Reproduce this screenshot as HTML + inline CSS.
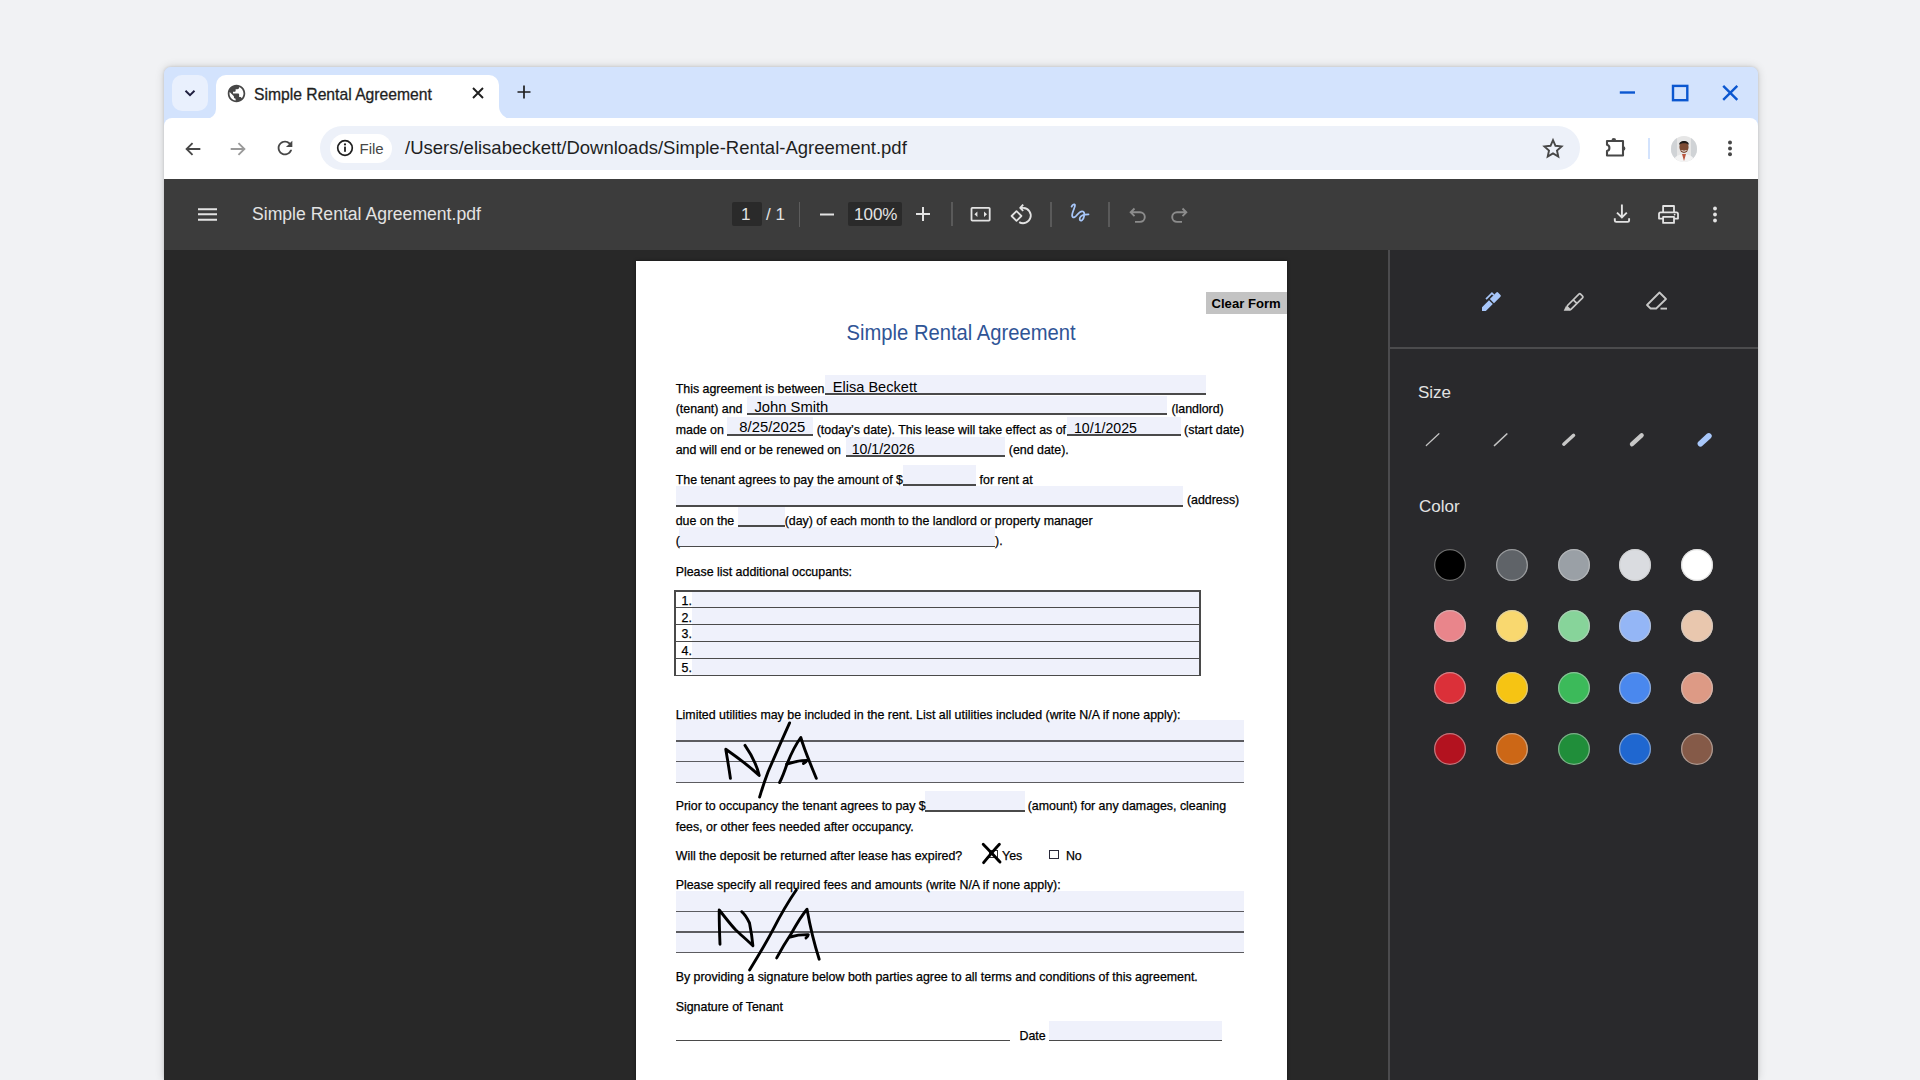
<!DOCTYPE html>
<html><head><meta charset="utf-8">
<style>
*{box-sizing:border-box;margin:0;padding:0}
html,body{width:1920px;height:1080px;overflow:hidden;background:#f1f2f4;font-family:"Liberation Sans",sans-serif}
.a{position:absolute}
svg{position:absolute;overflow:visible}
#win{position:absolute;left:164px;top:67px;width:1594px;height:1013px;border-radius:7px 7px 0 0;overflow:hidden;background:#d3e3fd;box-shadow:0 0 10px rgba(0,0,0,.16),0 0 3px rgba(0,0,0,.14)}
.t{position:absolute;white-space:nowrap;line-height:1;z-index:2}
</style></head><body>
<div id="win">
  <div class="a" style="left:0;top:0;width:1594px;height:51px;background:#d3e3fd"></div>
  <div class="a" style="left:0;top:51px;width:1594px;height:61px;background:#fff;border-radius:8px 8px 0 0"></div>
  <div class="a" style="left:0;top:112px;width:1594px;height:71px;background:#3c3c3c"></div>
  <div class="a" style="left:0;top:183px;width:1594px;height:830px;background:#282828"></div>
</div>
<!-- tab strip -->
<div class="a" style="left:172px;top:75px;width:36px;height:36px;border-radius:10px;background:#e9f0fd"></div>
<svg style="left:182px;top:85px" width="16" height="16" viewBox="0 0 16 16"><path d="M3.5 5.8 L8 10.2 L12.5 5.8" fill="none" stroke="#1f1f3f" stroke-width="1.9"/></svg>
<!-- active tab -->
<div class="a" style="left:216px;top:75px;width:283px;height:44px;background:#fff;border-radius:10px 10px 0 0"></div>
<svg style="left:206px;top:108.5px" width="10" height="10"><path d="M0 10 A10 10 0 0 0 10 0 L10 10 Z" fill="#fff"/></svg>
<svg style="left:499px;top:105.5px" width="13" height="13"><path d="M13 13 A13 13 0 0 1 0 0 L0 13 Z" fill="#fff"/></svg>
<svg style="left:225.5px;top:82.5px" width="21" height="21" viewBox="0 0 24 24"><path fill="#474747" d="M12 2C6.48 2 2 6.48 2 12s4.48 10 10 10 10-4.48 10-10S17.52 2 12 2zm-1 17.93c-3.95-.49-7-3.85-7-7.93 0-.62.08-1.21.21-1.79L9 15v1c0 1.1.9 2 2 2v1.930zm6.9-2.54c-.26-.81-1-1.39-1.9-1.390h-1v-3c0-.55-.45-1-1-1H8v-2h2c.55 0 1-.45 1-1V7h2c1.1 0 2-.9 2-2v-.41c2.93 1.190 5 4.060 5 7.410 0 2.080-.8 3.970-2.100 5.390z"/></svg>
<div class="t" style="left:254px;top:86.8px;font-size:15.7px;color:#1f1f1f;-webkit-text-stroke:0.3px #1f1f1f">Simple Rental Agreement</div>
<svg style="left:472px;top:86.5px" width="12" height="12" viewBox="0 0 12 12"><path d="M1 1 L11 11 M11 1 L1 11" stroke="#1f1f1f" stroke-width="1.9"/></svg>
<svg style="left:517px;top:85.3px" width="14" height="14" viewBox="0 0 14 14"><path d="M7 0.5 V13.5 M0.5 7 H13.5" stroke="#1f1f1f" stroke-width="1.7"/></svg>
<!-- window controls -->
<svg style="left:1619px;top:85px" width="18" height="16"><path d="M0.8 7.5 H16" stroke="#0b57d0" stroke-width="2.4"/></svg>
<svg style="left:1670px;top:84px" width="18" height="18"><rect x="3" y="1.9" width="14.3" height="14.3" fill="none" stroke="#0b57d0" stroke-width="2.4"/></svg>
<svg style="left:1721px;top:84px" width="18" height="18"><path d="M2.2 1.8 L16.3 15.9 M16.3 1.8 L2.2 15.9" stroke="#0b57d0" stroke-width="2.4"/></svg>

<!-- toolbar -->
<svg style="left:182px;top:138px" width="22" height="22" viewBox="0 0 24 24"><path d="M20 12H5 M11.5 5.5 L5 12 L11.5 18.5" fill="none" stroke="#474747" stroke-width="2"/></svg>
<svg style="left:227px;top:138px" width="22" height="22" viewBox="0 0 24 24"><path d="M4 12H19 M12.5 5.5 L19 12 L12.5 18.5" fill="none" stroke="#9a9a9a" stroke-width="2"/></svg>
<svg style="left:274px;top:137px" width="22" height="22" viewBox="0 0 24 24"><path fill="#474747" d="M17.65 6.35A7.958 7.958 0 0 0 12 4c-4.42 0-7.99 3.58-7.99 8s3.570 8 7.990 8c3.730 0 6.840-2.550 7.730-6h-2.080A5.990 5.990 0 0 1 12 18c-3.310 0-6-2.690-6-6s2.690-6 6-6c1.660 0 3.140.69 4.220 1.780L13 11h7V4l-2.350 2.350z"/></svg>
<div class="a" style="left:320px;top:126px;width:1260px;height:44px;border-radius:22px;background:#edf1f9"></div>
<div class="a" style="left:330px;top:134px;width:62px;height:29px;border-radius:15px;background:#fff"></div>
<svg style="left:336px;top:139px" width="18" height="18" viewBox="0 0 18 18"><circle cx="9" cy="9" r="7.3" fill="none" stroke="#1f1f1f" stroke-width="1.7"/><rect x="8.1" y="7.6" width="1.8" height="5.2" fill="#1f1f1f"/><circle cx="9" cy="5.4" r="1.1" fill="#1f1f1f"/></svg>
<div class="t" style="left:359.5px;top:140.5px;font-size:15px;color:#474747">File</div>
<div class="t" style="left:405px;top:139px;font-size:18.5px;color:#1f1f1f">/Users/elisabeckett/Downloads/Simple-Rental-Agreement.pdf</div>
<svg style="left:1540.5px;top:136.5px" width="24" height="24" viewBox="0 0 24 24"><path fill="none" stroke="#474747" stroke-width="1.9" stroke-linejoin="miter" stroke-miterlimit="10" d="M12.00 3.20 L14.47 8.80 L20.56 9.42 L15.99 13.50 L17.29 19.48 L12.00 16.40 L6.71 19.48 L8.01 13.50 L3.44 9.42 L9.53 8.80 Z"/></svg>
<svg style="left:1604px;top:136px" width="24" height="24" viewBox="0 0 24 24"><path fill="none" stroke="#474747" stroke-width="2.1" stroke-linejoin="round" d="M3 5 H19 V19.5 H3 V15 A3.2 3.2 0 0 0 3 8.8 Z"/><path d="M7.5 4.2 A2.3 2.3 0 0 1 12.1 4.2 Z M19.2 10.2 A2.2 2.2 0 0 1 19.2 14.6 Z" fill="#474747"/></svg>
<div class="a" style="left:1648px;top:138px;width:2px;height:21px;background:#d3e3fd"></div>
<svg style="left:1670px;top:135px" width="28" height="28" viewBox="0 0 28 28"><defs><clipPath id="avc"><circle cx="14" cy="14" r="13"/></clipPath></defs><g clip-path="url(#avc)"><rect width="28" height="28" fill="#e6e6e6"/><rect x="0" y="0" width="7" height="28" fill="#d0d3d6"/><rect x="21" y="0" width="7" height="28" fill="#d0d3d6"/><path d="M3 28 C4 21 8 19.5 14 19.5 C20 19.5 24 21 25 28 Z" fill="#f4f4f4"/><path d="M12 19 L14 26 L16 19 Z" fill="#b9563f"/><ellipse cx="14" cy="12" rx="4.6" ry="6" fill="#7b4a33"/><path d="M9 10 C9 4.5 19 4.5 19 10 C18 7.5 10 7.5 9 10 Z" fill="#1e1a18"/><path d="M11.5 15.5 Q14 17 16.5 15.5" stroke="#fff" stroke-width="0.9" fill="none"/></g></svg>
<svg style="left:1726px;top:138px" width="8" height="22" viewBox="0 0 8 22"><circle cx="4" cy="4.5" r="2" fill="#474747"/><circle cx="4" cy="10.5" r="2" fill="#474747"/><circle cx="4" cy="16.2" r="2" fill="#474747"/></svg>

<!-- PDF toolbar -->
<svg style="left:198px;top:208px" width="20" height="13" viewBox="0 0 20 13"><path d="M0 1.2H19 M0 6.2H19 M0 11.7H19" stroke="#e3e3e3" stroke-width="2"/></svg>
<div class="t" style="left:252px;top:205.6px;font-size:17.6px;color:#e3e3e3">Simple Rental Agreement.pdf</div>
<div class="a" style="left:732px;top:202px;width:30px;height:24px;background:#2a2a2a;border-radius:2px"></div>
<div class="t" style="left:741px;top:206px;font-size:17px;color:#e3e3e3">1</div>
<div class="t" style="left:766px;top:206px;font-size:17px;color:#e3e3e3">/ 1</div>
<div class="a" style="left:798.5px;top:201.5px;width:1.5px;height:25px;background:#5c5c5c"></div>
<svg style="left:820px;top:213px" width="14" height="3"><path d="M0 1.5H14" stroke="#e3e3e3" stroke-width="2"/></svg>
<div class="a" style="left:848px;top:202px;width:54px;height:24px;background:#2a2a2a;border-radius:2px"></div>
<div class="t" style="left:854px;top:206px;font-size:17px;color:#e3e3e3">100%</div>
<svg style="left:916px;top:207px" width="14" height="14"><path d="M0 7H14 M7 0V14" stroke="#e3e3e3" stroke-width="2"/></svg>
<div class="a" style="left:951px;top:202px;width:2px;height:24px;background:#5a5a5a"></div>
<svg style="left:970px;top:206px" width="22" height="17" viewBox="0 0 22 17"><rect x="1.5" y="1.8" width="18.2" height="12.8" rx="0.8" fill="none" stroke="#e3e3e3" stroke-width="1.8"/><path d="M4.4 8.2 L7.4 5.5 V10.9Z M17 8.2 L14 5.5 V10.9Z" fill="#e3e3e3"/></svg>
<svg style="left:1008px;top:202px" width="26" height="26" viewBox="0 0 26 26"><path d="M3.6 14 L8.5 9.1 L13.4 14 L8.5 18.9 Z" fill="none" stroke="#e3e3e3" stroke-width="1.8" stroke-linejoin="round"/><path d="M15.5 6 A7.6 7.6 0 1 1 11.2 20.1" fill="none" stroke="#e3e3e3" stroke-width="1.9"/><path d="M15.2 2.6 L12.2 5.8 L15.2 8.8" fill="none" stroke="#e3e3e3" stroke-width="1.9" stroke-linejoin="round"/><path d="M12.6 5.9 H15.8" stroke="#e3e3e3" stroke-width="1.9"/></svg>
<div class="a" style="left:1050px;top:202px;width:2px;height:25px;background:#5a5a5a"></div>
<svg style="left:1068px;top:202px" width="24" height="22" viewBox="0 0 24 22"><path d="M3.6 4.6 C4.5 2.5 6.5 1.5 7 3 C7.5 5 3.5 11 4.2 14 C4.8 16.5 7 15.5 9 13 C11 10.5 12.5 8.5 15 9.5 C17.5 10.5 16 17 14 18.3 C12.3 19.3 11 18 12 15.5 C13 13 17 12.5 20.5 12.4" fill="none" stroke="#a8c7fa" stroke-width="1.8" stroke-linecap="round"/></svg>
<div class="a" style="left:1108px;top:202px;width:2px;height:25px;background:#5a5a5a"></div>
<svg style="left:1129px;top:207px" width="18" height="16" viewBox="0 0 18 16"><path d="M5.5 1.5 L1.7 5.3 L5.5 9.1 M1.7 5.3 H11 A4.8 4.8 0 0 1 11 14.9 H6" fill="none" stroke="#8c8c8c" stroke-width="1.9"/></svg>
<svg style="left:1170px;top:207px" width="18" height="16" viewBox="0 0 18 16"><path d="M12.5 1.5 L16.3 5.3 L12.5 9.1 M16.3 5.3 H7 A4.8 4.8 0 0 0 7 14.9 H12" fill="none" stroke="#8c8c8c" stroke-width="1.9"/></svg>
<svg style="left:1612px;top:204px" width="20" height="20" viewBox="0 0 20 20"><path d="M9.9 0.5 V13.2 M5 8.6 L9.9 13.5 L14.8 8.6 M2.8 14.2 V16.5 A1.4 1.4 0 0 0 4.2 17.9 H15.7 A1.4 1.4 0 0 0 17.1 16.5 V14.2" fill="none" stroke="#e3e3e3" stroke-width="1.9"/></svg>
<svg style="left:1657px;top:204px" width="23" height="20" viewBox="0 0 23 20"><path d="M6.1 7.6 V2 H17 V7.6 M6.1 14.6 H2 V10 A1.6 1.6 0 0 1 3.6 8.4 H19.4 A1.6 1.6 0 0 1 21 10 V14.6 H17 M6.1 12.8 H17 V18.9 H6.1 Z" fill="none" stroke="#e3e3e3" stroke-width="1.8" stroke-linejoin="round"/><circle cx="17.6" cy="10.6" r="0.9" fill="#e3e3e3"/></svg>
<svg style="left:1711px;top:206px" width="8" height="18" viewBox="0 0 8 18"><circle cx="4" cy="2.5" r="1.9" fill="#e3e3e3"/><circle cx="4" cy="8.5" r="1.9" fill="#e3e3e3"/><circle cx="4" cy="14.5" r="1.9" fill="#e3e3e3"/></svg>

<!--DOC-->
<div class="a" style="left:636px;top:260.5px;width:650.5px;height:820px;background:#fff;box-shadow:0 0 3px rgba(0,0,0,.5)"></div>
<div class="a" style="left:1206px;top:292px;width:80.5px;height:21.5px;background:#c3c3c3"></div>
<div class="t" style="left:1211.5px;top:296.5px;font-size:13.1px;color:#000;font-weight:bold">Clear Form</div>
<div class="t" style="left:846.6px;top:322.8px;font-size:20.2px;color:#2f5496;transform:scaleY(1.08);transform-origin:0 80%">Simple Rental Agreement</div>
<div class="t" style="left:675.7px;top:382.5px;font-size:12.4px;color:#000;-webkit-text-stroke:0.25px #000;">This agreement is between</div>
<div class="a" style="left:825.3px;top:374.6px;width:381.2px;height:19.6px;background:#eff1fb"></div>
<div class="a" style="left:825.3px;top:393.4px;width:381.2px;height:1.6px;background:#4a4a4a"></div>
<div class="t" style="left:832.8px;top:379.5px;font-size:14.57px;color:#000;">Elisa Beckett</div>
<div class="t" style="left:675.7px;top:402.7px;font-size:12.4px;color:#000;-webkit-text-stroke:0.25px #000;">(tenant) and</div>
<div class="a" style="left:746.9px;top:395.5px;width:420.4px;height:18.7px;background:#eff1fb"></div>
<div class="a" style="left:746.9px;top:413.4px;width:420.4px;height:1.6px;background:#4a4a4a"></div>
<div class="t" style="left:754.4px;top:399.5px;font-size:14.79px;color:#000;">John Smith</div>
<div class="t" style="left:1171.4px;top:402.7px;font-size:12.4px;color:#000;-webkit-text-stroke:0.25px #000;">(landlord)</div>
<div class="t" style="left:675.7px;top:423.7px;font-size:12.4px;color:#000;-webkit-text-stroke:0.25px #000;">made on</div>
<div class="a" style="left:727.3px;top:416.5px;width:85.9px;height:18.7px;background:#eff1fb"></div>
<div class="a" style="left:727.3px;top:434.4px;width:85.9px;height:1.6px;background:#4a4a4a"></div>
<div class="t" style="left:739.3px;top:420.4px;font-size:14.84px;color:#000;">8/25/2025</div>
<div class="t" style="left:816.7px;top:423.7px;font-size:12.4px;color:#000;-webkit-text-stroke:0.25px #000;">(today’s date). This lease will take effect as of</div>
<div class="a" style="left:1067.3px;top:416.5px;width:113.4px;height:18.7px;background:#eff1fb"></div>
<div class="a" style="left:1067.3px;top:434.4px;width:113.4px;height:1.6px;background:#4a4a4a"></div>
<div class="t" style="left:1074.0px;top:421.0px;font-size:14.16px;color:#000;">10/1/2025</div>
<div class="t" style="left:1184.1px;top:423.7px;font-size:12.4px;color:#000;-webkit-text-stroke:0.25px #000;">(start date)</div>
<div class="t" style="left:675.7px;top:444.4px;font-size:12.4px;color:#000;-webkit-text-stroke:0.25px #000;">and will end or be renewed on</div>
<div class="a" style="left:845.5px;top:437.0px;width:159.9px;height:18.9px;background:#eff1fb"></div>
<div class="a" style="left:845.5px;top:455.1px;width:159.9px;height:1.6px;background:#4a4a4a"></div>
<div class="t" style="left:851.7px;top:441.7px;font-size:14.14px;color:#000;">10/1/2026</div>
<div class="t" style="left:1008.8px;top:444.4px;font-size:12.4px;color:#000;-webkit-text-stroke:0.25px #000;">(end date).</div>
<div class="t" style="left:675.7px;top:473.9px;font-size:12.4px;color:#000;-webkit-text-stroke:0.25px #000;">The tenant agrees to pay the amount of $</div>
<div class="a" style="left:902.6px;top:465.3px;width:73.6px;height:19.9px;background:#eff1fb"></div>
<div class="a" style="left:902.6px;top:484.4px;width:73.6px;height:1.6px;background:#4a4a4a"></div>
<div class="t" style="left:979.6px;top:473.9px;font-size:12.4px;color:#000;-webkit-text-stroke:0.25px #000;">for rent at</div>
<div class="a" style="left:675.7px;top:486.0px;width:507.8px;height:19.9px;background:#eff1fb"></div>
<div class="a" style="left:675.7px;top:505.1px;width:507.8px;height:1.6px;background:#4a4a4a"></div>
<div class="t" style="left:1186.9px;top:493.7px;font-size:12.4px;color:#000;-webkit-text-stroke:0.25px #000;">(address)</div>
<div class="t" style="left:675.7px;top:514.5px;font-size:12.4px;color:#000;-webkit-text-stroke:0.25px #000;">due on the</div>
<div class="a" style="left:738.3px;top:506.6px;width:46.4px;height:19.4px;background:#eff1fb"></div>
<div class="a" style="left:738.3px;top:525.2px;width:46.4px;height:1.6px;background:#4a4a4a"></div>
<div class="t" style="left:784.7px;top:514.5px;font-size:12.4px;color:#000;-webkit-text-stroke:0.25px #000;">(day) of each month to the landlord or property manager</div>
<div class="t" style="left:675.7px;top:535.1px;font-size:12.4px;color:#000;-webkit-text-stroke:0.25px #000;">(</div>
<div class="a" style="left:679.2px;top:527.2px;width:315.8px;height:19.2px;background:#eff1fb"></div>
<div class="a" style="left:679.2px;top:545.6px;width:315.8px;height:1.6px;background:#4a4a4a"></div>
<div class="t" style="left:995.0px;top:535.1px;font-size:12.4px;color:#000;-webkit-text-stroke:0.25px #000;">).</div>
<div class="t" style="left:675.7px;top:566.0px;font-size:12.4px;color:#000;-webkit-text-stroke:0.25px #000;">Please list additional occupants:</div>
<div class="a" style="left:692px;top:591px;width:507px;height:84px;background:#eff1fb"></div>
<div class="a" style="left:675px;top:590.35px;width:526px;height:1.3px;background:#4a4a4a"></div>
<div class="a" style="left:675px;top:606.85px;width:526px;height:1.3px;background:#4a4a4a"></div>
<div class="a" style="left:675px;top:623.55px;width:526px;height:1.3px;background:#4a4a4a"></div>
<div class="a" style="left:675px;top:640.65px;width:526px;height:1.3px;background:#4a4a4a"></div>
<div class="a" style="left:675px;top:657.95px;width:526px;height:1.3px;background:#4a4a4a"></div>
<div class="a" style="left:675px;top:674.55px;width:526px;height:1.3px;background:#4a4a4a"></div>
<div class="a" style="left:674.35px;top:590.35px;width:1.3px;height:85.5px;background:#4a4a4a"></div>
<div class="a" style="left:1199.35px;top:590.35px;width:1.3px;height:85.5px;background:#4a4a4a"></div>
<div class="t" style="left:681.6px;top:594.6px;font-size:12.4px;color:#000;-webkit-text-stroke:0.25px #000;">1.</div>
<div class="t" style="left:681.6px;top:611.5px;font-size:12.4px;color:#000;-webkit-text-stroke:0.25px #000;">2.</div>
<div class="t" style="left:681.6px;top:628.3px;font-size:12.4px;color:#000;-webkit-text-stroke:0.25px #000;">3.</div>
<div class="t" style="left:681.6px;top:645.4px;font-size:12.4px;color:#000;-webkit-text-stroke:0.25px #000;">4.</div>
<div class="t" style="left:681.6px;top:662.3px;font-size:12.4px;color:#000;-webkit-text-stroke:0.25px #000;">5.</div>
<div class="t" style="left:675.7px;top:708.9px;font-size:12.4px;color:#000;-webkit-text-stroke:0.25px #000;">Limited utilities may be included in the rent. List all utilities included (write N/A if none apply):</div>
<div class="a" style="left:675.7px;top:720.3px;width:568.6px;height:62px;background:#eff1fb"></div>
<div class="a" style="left:675.7px;top:740.3px;width:568.6px;height:1.5px;background:#5c5c60"></div>
<div class="a" style="left:675.7px;top:760.9px;width:568.6px;height:1.5px;background:#5c5c60"></div>
<div class="a" style="left:675.7px;top:781.5px;width:568.6px;height:1.5px;background:#5c5c60"></div>
<div class="t" style="left:675.7px;top:800.3px;font-size:12.4px;color:#000;-webkit-text-stroke:0.25px #000;">Prior to occupancy the tenant agrees to pay $</div>
<div class="a" style="left:924.6px;top:791.4px;width:100.0px;height:19.6px;background:#eff1fb"></div>
<div class="a" style="left:924.6px;top:810.2px;width:100.0px;height:1.6px;background:#4a4a4a"></div>
<div class="t" style="left:1027.7px;top:800.3px;font-size:12.4px;color:#000;-webkit-text-stroke:0.25px #000;">(amount) for any damages, cleaning</div>
<div class="t" style="left:675.7px;top:820.6px;font-size:12.4px;color:#000;-webkit-text-stroke:0.25px #000;">fees, or other fees needed after occupancy.</div>
<div class="t" style="left:675.7px;top:849.8px;font-size:12.4px;color:#000;-webkit-text-stroke:0.25px #000;">Will the deposit be returned after lease has expired?</div>
<div class="a" style="left:989.2px;top:850.3px;width:8.4px;height:8.2px;border:1px solid #333"></div>
<div class="t" style="left:1002.0px;top:849.8px;font-size:12.4px;color:#000;-webkit-text-stroke:0.25px #000;">Yes</div>
<div class="a" style="left:1049.4px;top:850px;width:9.5px;height:9px;border:1.1px solid #2a2a3a"></div>
<div class="t" style="left:1065.9px;top:849.8px;font-size:12.4px;color:#000;-webkit-text-stroke:0.25px #000;">No</div>
<div class="t" style="left:675.7px;top:879.4px;font-size:12.4px;color:#000;-webkit-text-stroke:0.25px #000;">Please specify all required fees and amounts (write N/A if none apply):</div>
<div class="a" style="left:675.7px;top:891.3px;width:568.6px;height:61.2px;background:#eff1fb"></div>
<div class="a" style="left:675.7px;top:910.6px;width:568.6px;height:1.5px;background:#5c5c60"></div>
<div class="a" style="left:675.7px;top:931.3px;width:568.6px;height:1.5px;background:#5c5c60"></div>
<div class="a" style="left:675.7px;top:951.9px;width:568.6px;height:1.5px;background:#5c5c60"></div>
<div class="t" style="left:675.7px;top:971.4px;font-size:12.4px;color:#000;-webkit-text-stroke:0.25px #000;">By providing a signature below both parties agree to all terms and conditions of this agreement.</div>
<div class="t" style="left:675.7px;top:1001.0px;font-size:12.4px;color:#000;-webkit-text-stroke:0.25px #000;">Signature of Tenant</div>
<div class="a" style="left:675.7px;top:1039.6px;width:334.2px;height:1.3px;background:#4a4a4a"></div>
<div class="t" style="left:1019.5px;top:1029.8px;font-size:12.4px;color:#000;-webkit-text-stroke:0.25px #000;">Date</div>
<div class="a" style="left:1048.7px;top:1020.6px;width:173.3px;height:19.9px;background:#eff1fb"></div>
<div class="a" style="left:1048.7px;top:1039.7px;width:173.3px;height:1.6px;background:#4a4a4a"></div>
<svg style="left:0;top:0;z-index:3" width="1920" height="1080"><g fill="none" stroke="#000" stroke-width="2.9" stroke-linecap="round" stroke-linejoin="round">
<path d="M730.4 778.3 C729 768 727 757 725.8 749.2 C737 757 749 766 759.2 775.4 C757 766 751 754 745 745.4"/>
<path d="M789.6 722.9 C781 742 774 758 768 772 C765 780 762 789 759.6 797.1"/>
<path d="M779.6 782.5 C783 776 785 770 787 764 C791 754 796 744 800.8 737.5 C805 752 811 765 816.3 778.3"/>
<path d="M786.7 764.2 C793 762 800 760.5 806.7 760.4 C806 762 804.5 763 803.5 763.5"/>
<path d="M720 944.2 C719.5 932 719.2 920 719.2 910 C725 917 730 924 735.8 930 C741 935 747 940 752.9 945.8 C752 936 750.5 928 749.5 923 C747 918 744.5 914 741.7 911.7"/>
<path d="M796.3 890 C788 902 780 916 773.3 929.2 C765 945 757 958 749.6 970"/>
<path d="M776.7 957.9 C782 948 787 940 791 934 C796 925 801 916 807 909.2 C810 926 814 943 819.2 959.2"/>
<path d="M790 937 C795 935.5 801 934.5 808.3 934.6 C808 936.5 807 937.5 806 938"/>
<path d="M983.2 844.2 C989 850 994.5 856.5 1000 862"/>
<path d="M999.4 844.2 C994 850 989 856 983.6 862.6"/>
</g></svg>
<!--/DOC-->
<!-- panel -->
<div class="a" style="left:1388px;top:250px;width:370px;height:830px;background:#29292c;border-left:2px solid #4b4b4d"></div>
<div class="a" style="left:1390px;top:347px;width:368px;height:2px;background:#4b4b4d"></div>
<svg style="left:1476px;top:286px" width="30" height="30" viewBox="0 0 30 30"><g transform="translate(6 25) rotate(-45)"><path d="M0 0 L2.7 -2.7 H12.6 V2.7 H2.7 Z M14 -2.9 H23.2 A1.2 1.2 0 0 1 24.4 -1.7 V1.7 A1.2 1.2 0 0 1 23.2 2.9 H14 Z" fill="#a8c7fa"/><path d="M11.2 -5.5 H19.6 V-2.8" fill="none" stroke="#a8c7fa" stroke-width="1.7"/></g></svg>
<svg style="left:1559px;top:286px" width="30" height="30" viewBox="0 0 30 30"><g transform="translate(9.5 22.2) rotate(-45)"><rect x="0" y="-2.6" width="18.5" height="5.2" rx="1.2" fill="none" stroke="#c7c7c7" stroke-width="1.7"/><path d="M9.3 -2.6 V2.6" stroke="#c7c7c7" stroke-width="1.7"/><path d="M-5.2 -1.6 L-0.2 3.4 L-0.2 -3.4 Z" fill="#c7c7c7"/></g></svg>
<svg style="left:1642px;top:286px" width="30" height="30" viewBox="0 0 30 30"><path d="M17.5 6.5 L24 13 L14.2 22.5 H8.6 L5 19 Z" fill="none" stroke="#c7c7c7" stroke-width="1.8" stroke-linejoin="round"/><path d="M18.5 22.6 H25" stroke="#c7c7c7" stroke-width="1.9"/></svg>
<div class="t" style="left:1418px;top:384px;font-size:17px;color:#e3e3e3">Size</div>
<svg style="left:1415px;top:425px" width="310" height="30"><g stroke-linecap="round">
<path d="M11.3 20.5 L23.9 8.7" stroke="#c4c4c4" stroke-width="1.2"/>
<path d="M79.5 20.5 L91.8 9" stroke="#c4c4c4" stroke-width="1.7"/>
<path d="M148.8 19.2 L158.6 10.3" stroke="#c7c7c7" stroke-width="3.4"/>
<path d="M217 19.2 L226.6 10.3" stroke="#c7c7c7" stroke-width="4.4"/>
<path d="M285.5 18.7 L293.8 11" stroke="#a8c7fa" stroke-width="5.8"/>
</g></svg>
<div class="t" style="left:1419px;top:498px;font-size:17px;color:#e3e3e3">Color</div>
<div class="a" style="left:1434.0px;top:548.6px;width:32px;height:32px;border-radius:50%;background:#000000;box-shadow:inset 0 0 0 1.3px rgba(200,200,200,.55)"></div>
<div class="a" style="left:1495.7px;top:548.6px;width:32px;height:32px;border-radius:50%;background:#5f6368;box-shadow:inset 0 0 0 1.3px rgba(200,200,200,.55)"></div>
<div class="a" style="left:1557.5px;top:548.6px;width:32px;height:32px;border-radius:50%;background:#9aa0a6;box-shadow:inset 0 0 0 1.3px rgba(200,200,200,.55)"></div>
<div class="a" style="left:1619.3px;top:548.6px;width:32px;height:32px;border-radius:50%;background:#dadce0;box-shadow:inset 0 0 0 1.3px rgba(200,200,200,.55)"></div>
<div class="a" style="left:1680.7px;top:548.6px;width:32px;height:32px;border-radius:50%;background:#ffffff;box-shadow:inset 0 0 0 1.3px rgba(200,200,200,.55)"></div>
<div class="a" style="left:1434.0px;top:610.3px;width:32px;height:32px;border-radius:50%;background:#e9858b;box-shadow:inset 0 0 0 1.3px rgba(200,200,200,.55)"></div>
<div class="a" style="left:1495.7px;top:610.3px;width:32px;height:32px;border-radius:50%;background:#f9d86f;box-shadow:inset 0 0 0 1.3px rgba(200,200,200,.55)"></div>
<div class="a" style="left:1557.5px;top:610.3px;width:32px;height:32px;border-radius:50%;background:#87d49a;box-shadow:inset 0 0 0 1.3px rgba(200,200,200,.55)"></div>
<div class="a" style="left:1619.3px;top:610.3px;width:32px;height:32px;border-radius:50%;background:#94b6f6;box-shadow:inset 0 0 0 1.3px rgba(200,200,200,.55)"></div>
<div class="a" style="left:1680.7px;top:610.3px;width:32px;height:32px;border-radius:50%;background:#e9c7ae;box-shadow:inset 0 0 0 1.3px rgba(200,200,200,.55)"></div>
<div class="a" style="left:1434.0px;top:672.0px;width:32px;height:32px;border-radius:50%;background:#db3039;box-shadow:inset 0 0 0 1.3px rgba(200,200,200,.55)"></div>
<div class="a" style="left:1495.7px;top:672.0px;width:32px;height:32px;border-radius:50%;background:#f6c413;box-shadow:inset 0 0 0 1.3px rgba(200,200,200,.55)"></div>
<div class="a" style="left:1557.5px;top:672.0px;width:32px;height:32px;border-radius:50%;background:#3cba5a;box-shadow:inset 0 0 0 1.3px rgba(200,200,200,.55)"></div>
<div class="a" style="left:1619.3px;top:672.0px;width:32px;height:32px;border-radius:50%;background:#4a88ee;box-shadow:inset 0 0 0 1.3px rgba(200,200,200,.55)"></div>
<div class="a" style="left:1680.7px;top:672.0px;width:32px;height:32px;border-radius:50%;background:#dd9a85;box-shadow:inset 0 0 0 1.3px rgba(200,200,200,.55)"></div>
<div class="a" style="left:1434.0px;top:733.4px;width:32px;height:32px;border-radius:50%;background:#b3121f;box-shadow:inset 0 0 0 1.3px rgba(200,200,200,.55)"></div>
<div class="a" style="left:1495.7px;top:733.4px;width:32px;height:32px;border-radius:50%;background:#cc6716;box-shadow:inset 0 0 0 1.3px rgba(200,200,200,.55)"></div>
<div class="a" style="left:1557.5px;top:733.4px;width:32px;height:32px;border-radius:50%;background:#208e3a;box-shadow:inset 0 0 0 1.3px rgba(200,200,200,.55)"></div>
<div class="a" style="left:1619.3px;top:733.4px;width:32px;height:32px;border-radius:50%;background:#1f67d0;box-shadow:inset 0 0 0 1.3px rgba(200,200,200,.55)"></div>
<div class="a" style="left:1680.7px;top:733.4px;width:32px;height:32px;border-radius:50%;background:#855a48;box-shadow:inset 0 0 0 1.3px rgba(200,200,200,.55)"></div>
</body></html>
